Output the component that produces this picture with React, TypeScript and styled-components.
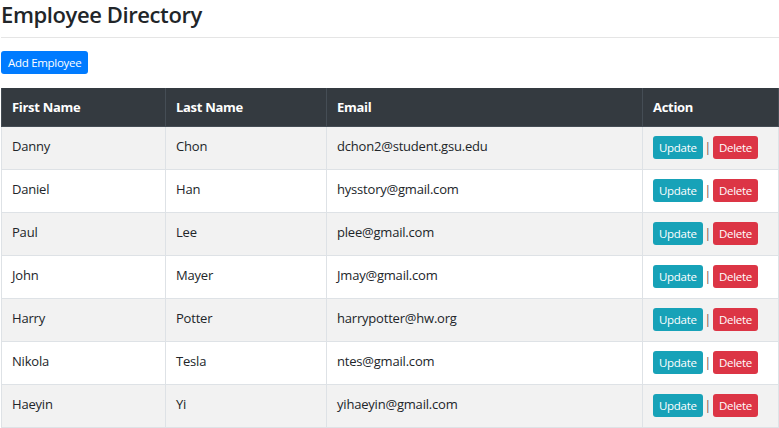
import React from "react";
import styled, { createGlobalStyle } from "styled-components";

const employees = [
  { first: "Danny", last: "Chon", email: "dchon2@student.gsu.edu" },
  { first: "Daniel", last: "Han", email: "hysstory@gmail.com" },
  { first: "Paul", last: "Lee", email: "plee@gmail.com" },
  { first: "John", last: "Mayer", email: "Jmay@gmail.com" },
  { first: "Harry", last: "Potter", email: "harrypotter@hw.org" },
  { first: "Nikola", last: "Tesla", email: "ntes@gmail.com" },
  { first: "Haeyin", last: "Yi", email: "yihaeyin@gmail.com" },
];

const App = () => {
  return (
    <>
      <GlobalStyle />
      <Page>
        <Title>Employee Directory</Title>
        <Rule />
        <AddButton>Add Employee</AddButton>
        <Table>
          <thead>
            <tr>
              <Th width={164}>First Name</Th>
              <Th width={161}>Last Name</Th>
              <Th width={316}>Email</Th>
              <Th>Action</Th>
            </tr>
          </thead>
          <tbody>
            {employees.map((emp, idx) => (
              <Row key={idx}>
                <Td>{emp.first}</Td>
                <Td>{emp.last}</Td>
                <Td>{emp.email}</Td>
                <Td>
                  <Actions>
                    <SmallButton variant="update">Update</SmallButton>
                    <Divider>|</Divider>
                    <SmallButton variant="delete">Delete</SmallButton>
                  </Actions>
                </Td>
              </Row>
            ))}
          </tbody>
        </Table>
      </Page>
    </>
  );
};

export default App;

const GlobalStyle = createGlobalStyle`
  body {
    margin: 0;
    background: #fff;
    color: #212529;
    font-family: "Open Sans", "Noto Sans", sans-serif;
  }
`;

const Page = styled.div`
  padding-left: 1px;
  width: 778px;
`;

const Title = styled.h3`
  margin: 0;
  font-size: 22px;
  font-weight: 600;
  line-height: 28px;
  letter-spacing: -0.4px;
`;

const Rule = styled.hr`
  margin: 9px 0 13px;
  border: 0;
  border-top: 1px solid #e5e5e5;
`;

const AddButton = styled.button`
  display: block;
  height: 23px;
  padding: 0 7px;
  border: 0;
  border-radius: 3px;
  background: #007bff;
  color: #fff;
  font-family: inherit;
  font-size: 11.5px;
  letter-spacing: -0.3px;
  margin-bottom: 14px;
`;

const Table = styled.table`
  width: 778px;
  border-collapse: collapse;
  font-size: 13px;
`;

const Th = styled.th<{ width?: number }>`
  width: ${({ width }) => (width ? `${width}px` : "auto")};
  height: 38px;
  padding: 0 10px;
  box-sizing: border-box;
  background: #343a40;
  color: #fff;
  text-align: left;
  font-weight: 700;
  letter-spacing: -0.3px;
  border: 1px solid #454d55;
  border-top: 0;
`;

const Row = styled.tr`
  &:nth-child(odd) {
    background: #f2f2f2;
  }
`;

const Td = styled.td`
  height: 43px;
  box-sizing: border-box;
  padding: 0 10px 3px;
  border: 1px solid #dee2e6;
  letter-spacing: -0.2px;
  vertical-align: middle;
`;

const Actions = styled.div`
  display: flex;
  align-items: center;
  gap: 3px;
  padding-top: 3px;
`;

const Divider = styled.span`
  color: #7a4a44;
  font-size: 12px;
  margin: 0 -1px;
`;

const SmallButton = styled.button<{ variant: "update" | "delete" }>`
  height: 23px;
  padding: 0 6px;
  border: 0;
  border-radius: 3px;
  background: ${({ variant }) => (variant === "update" ? "#17a2b8" : "#dc3545")};
  color: #fff;
  font-family: inherit;
  font-size: 11.5px;
  letter-spacing: -0.3px;
`;
